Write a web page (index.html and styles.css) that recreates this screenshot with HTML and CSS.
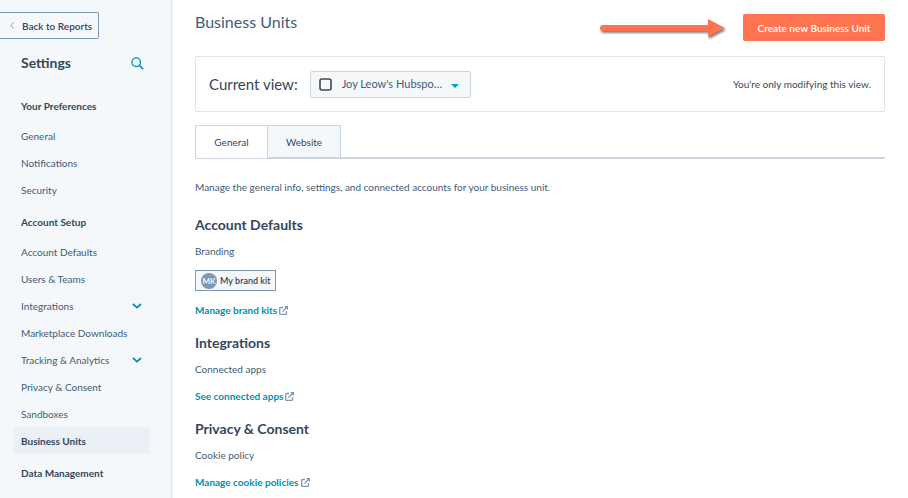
FILE: index.html
```html
<!DOCTYPE html>
<html lang="en">
<head>
  <meta charset="UTF-8">
  <meta name="viewport" content="width=device-width, initial-scale=1.0">
  <title>Settings - Business Units</title>
  <link rel="stylesheet" href="styles.css">
</head>
<body>

  <!-- Shared icons -->
  <svg class="icon-defs" aria-hidden="true">
    <symbol id="icon-chevron" viewBox="0 0 10 6">
      <path d="M1 1 L5 4.6 L9 1" fill="none" stroke="#0091ae" stroke-width="1.8"/>
    </symbol>
    <symbol id="icon-external" viewBox="0 0 9 9">
      <path d="M4 1.5 H1.6 Q0.7 1.5 0.7 2.4 V7.4 Q0.7 8.3 1.6 8.3 H6.6 Q7.5 8.3 7.5 7.4 V5" fill="none" stroke="#7c98b6" stroke-width="1.3"/>
      <path d="M3.4 5.6 L7.8 1.2" fill="none" stroke="#7c98b6" stroke-width="1.3"/>
      <path d="M5 0 H9 V4 Z" fill="#7c98b6"/>
    </symbol>
  </svg>

  <div class="page">
    <!-- Sidebar -->
    <aside class="sidebar">
      <button type="button" class="back-btn">
        <svg width="4" height="7" viewBox="0 0 4 7" aria-hidden="true">
          <path d="M3.5 0.5 L0.8 3.5 L3.5 6.5" fill="none" stroke="#7c98b6"/>
        </svg>
        Back to Reports
      </button>

      <div class="sidebar-header">
        <h2 class="sidebar-title">Settings</h2>
        <button type="button" class="search-btn" aria-label="Search settings">
          <svg width="13" height="13" viewBox="0 0 13 13" aria-hidden="true">
            <circle cx="5.2" cy="5.2" r="4.3" fill="none" stroke="#0091ae" stroke-width="1.3"/>
            <path d="M8.4 8.4 L12.3 12.2" stroke="#0091ae" stroke-width="1.6"/>
          </svg>
        </button>
      </div>

      <nav class="nav">
        <h3 class="nav-heading">Your Preferences</h3>
        <a class="nav-item" href="#">General</a>
        <a class="nav-item" href="#">Notifications</a>
        <a class="nav-item" href="#">Security</a>

        <h3 class="nav-heading">Account Setup</h3>
        <a class="nav-item" href="#">Account Defaults</a>
        <a class="nav-item" href="#">Users &amp; Teams</a>
        <a class="nav-item" href="#">Integrations <svg class="chevron"><use href="#icon-chevron"/></svg></a>
        <a class="nav-item" href="#">Marketplace Downloads</a>
        <a class="nav-item" href="#">Tracking &amp; Analytics <svg class="chevron"><use href="#icon-chevron"/></svg></a>
        <a class="nav-item" href="#">Privacy &amp; Consent</a>
        <a class="nav-item" href="#">Sandboxes</a>
        <a class="nav-item active" href="#">Business Units</a>

        <h3 class="nav-heading">Data Management</h3>
      </nav>
    </aside>

    <!-- Main content -->
    <main class="main">
      <header class="main-header">
        <h1 class="page-title">Business Units</h1>
        <svg class="arrow" width="132" height="26" viewBox="0 0 132 26" aria-hidden="true">
          <path d="M5 10 H110 V4 L127 13 L110 22 V16 H5 A3 3 0 0 1 5 10 Z" fill="#ff7450"/>
        </svg>
        <button type="button" class="create-btn">Create new Business Unit</button>
      </header>

      <div class="view-card">
        <label class="view-label" for="view">Current view:</label>
        <div class="view-picker">
          <svg class="view-box" width="13" height="13" viewBox="0 0 13 13" aria-hidden="true">
            <rect x="1" y="1" width="11" height="11" rx="2" fill="none" stroke="#45464d" stroke-width="1.6"/>
          </svg>
          <select id="view" class="view-select">
            <option>Joy Leow's Hubspo…</option>
          </select>
          <svg class="view-caret" width="8" height="4" viewBox="0 0 8 4" aria-hidden="true">
            <path d="M0 0 H8 L4.6 3.6 Q4 4 3.4 3.6 Z" fill="#00a4bd"/>
          </svg>
        </div>
        <span class="view-note">You're only modifying this view.</span>
      </div>

      <div class="tabs" role="tablist">
        <button type="button" class="tab selected" role="tab" aria-selected="true">General</button>
        <button type="button" class="tab" role="tab" aria-selected="false">Website</button>
      </div>

      <p class="intro">Manage the general info, settings, and connected accounts for your business unit.</p>

      <section class="section">
        <h2 class="section-title">Account Defaults</h2>
        <p class="section-text">Branding</p>
        <button type="button" class="brand-kit"><span class="avatar">MK</span>My brand kit</button>
        <a class="section-link" href="#">Manage brand kits <svg class="external"><use href="#icon-external"/></svg></a>
      </section>

      <section class="section">
        <h2 class="section-title">Integrations</h2>
        <p class="section-text">Connected apps</p>
        <a class="section-link" href="#">See connected apps <svg class="external"><use href="#icon-external"/></svg></a>
      </section>

      <section class="section">
        <h2 class="section-title">Privacy &amp; Consent</h2>
        <p class="section-text">Cookie policy</p>
        <a class="section-link" href="#">Manage cookie policies <svg class="external"><use href="#icon-external"/></svg></a>
      </section>
    </main>
  </div>

</body>
</html>
```
FILE: styles.css
```css
/* General Reset */
* {
  margin: 0;
  padding: 0;
  box-sizing: border-box;
}

body {
  background: #ffffff;
  color: #33475b;
  font-family: Lato, "Liberation Sans", sans-serif;
  font-size: 10px;
  line-height: 20px;
}

button,
select {
  font: inherit;
  color: inherit;
  cursor: pointer;
}

a {
  text-decoration: none;
}

.icon-defs {
  display: none;
}

.page {
  display: flex;
  min-height: 100vh;
}

/* Sidebar */
.sidebar {
  flex: 0 0 172px;
  padding-top: 12px;
  background: #f5f8fa;
  border-right: 1px solid #dfe6ee;
  box-shadow: 1px 0 1px #edf1f6;
}

.back-btn {
  display: flex;
  align-items: center;
  gap: 8px;
  height: 27px;
  padding: 0 6px 0 10px;
  background: #f5f8fa;
  border: 1px solid #7c98b6;
  border-left: none;
  border-radius: 0 2px 2px 0;
  font-weight: 600;
}

.sidebar-header {
  display: flex;
  align-items: center;
  justify-content: space-between;
  height: 24px;
  margin-top: 12px;
  padding: 0 27px 0 21px;
}

.sidebar-title {
  font-size: 14px;
}

.search-btn {
  display: flex;
  background: none;
  border: none;
}

/* Navigation */
.nav {
  padding: 12px 21px 12px 13px;
}

.nav-heading {
  margin: 6px 0 3px;
  padding-left: 8px;
  font-size: 10px;
  line-height: 26px;
}

.nav-item {
  display: flex;
  align-items: center;
  justify-content: space-between;
  height: 27px;
  padding: 0 8px;
  border-radius: 2px;
  color: #425b76;
}

.nav-item.active {
  background: #eaf0f6;
  color: #33475b;
  font-weight: 700;
}

.chevron {
  width: 10px;
  height: 6px;
}

/* Main content */
.main {
  flex: 1;
  min-width: 0;
  padding: 14px 23px 4px;
}

.main-header {
  display: flex;
  align-items: center;
  height: 27px;
}

.page-title {
  padding-bottom: 12px;
  color: #425b76;
  font-size: 16px;
  font-weight: 400;
}

.arrow {
  margin-left: auto;
  margin-right: 13px;
  filter: drop-shadow(1px 2px 1px rgba(0, 0, 0, 0.5));
}

.create-btn {
  width: 142px;
  height: 27px;
  background: #ff7450;
  border: none;
  border-radius: 2px;
  color: #ffffff;
  font-weight: 600;
}

/* Current view */
.view-card {
  display: flex;
  align-items: center;
  height: 56px;
  margin-top: 15px;
  padding: 0 13px;
  border: 1px solid #dfe3eb;
  border-radius: 2px;
}

.view-label {
  margin-right: 12px;
  font-size: 15px;
}

.view-picker {
  position: relative;
}

.view-select {
  display: block;
  width: 161px;
  height: 27px;
  padding: 0 22px 0 31px;
  appearance: none;
  background: #f5f8fa;
  border: 1px solid #cbd6e2;
  border-radius: 2px;
  color: #425b76;
  font-size: 11px;
}

.view-box,
.view-caret {
  position: absolute;
  pointer-events: none;
}

.view-box {
  top: 7px;
  left: 9px;
}

.view-caret {
  top: 13px;
  right: 12px;
}

.view-note {
  margin-left: auto;
}

/* Tabs */
.tabs {
  display: flex;
  height: 34px;
  margin-top: 13px;
  border-bottom: 2px solid #cbd6e2;
}

.tab {
  width: 73px;
  height: 33px;
  background: #f5f8fa;
  border: 1px solid #cbd6e2;
  border-left: none;
}

.tab.selected {
  background: #ffffff;
  border-left: 1px solid #cbd6e2;
  border-bottom: none;
}

.intro {
  margin: 18px 0 16px;
  color: #425b76;
}

/* Sections */
.section {
  display: flex;
  flex-direction: column;
  align-items: flex-start;
  margin-bottom: 11px;
}

.section-title {
  font-size: 14px;
  line-height: 24px;
}

.section-text {
  margin-top: 4px;
  color: #425b76;
}

.brand-kit {
  display: flex;
  align-items: center;
  gap: 3px;
  height: 21px;
  margin: 9px 0 2px;
  padding: 0 4px 0 5px;
  background: #f5f8fa;
  border: 1px solid #7c98b6;
  font-size: 9px;
  font-weight: 600;
}

.avatar {
  width: 16px;
  height: 16px;
  border-radius: 50%;
  background: #7c98b6;
  color: #ffffff;
  font-size: 8px;
  line-height: 16px;
  text-align: center;
}

.section-link {
  display: flex;
  align-items: center;
  gap: 2px;
  margin-top: 7px;
  color: #0091ae;
  font-weight: 700;
}

.external {
  width: 9px;
  height: 9px;
}
```
